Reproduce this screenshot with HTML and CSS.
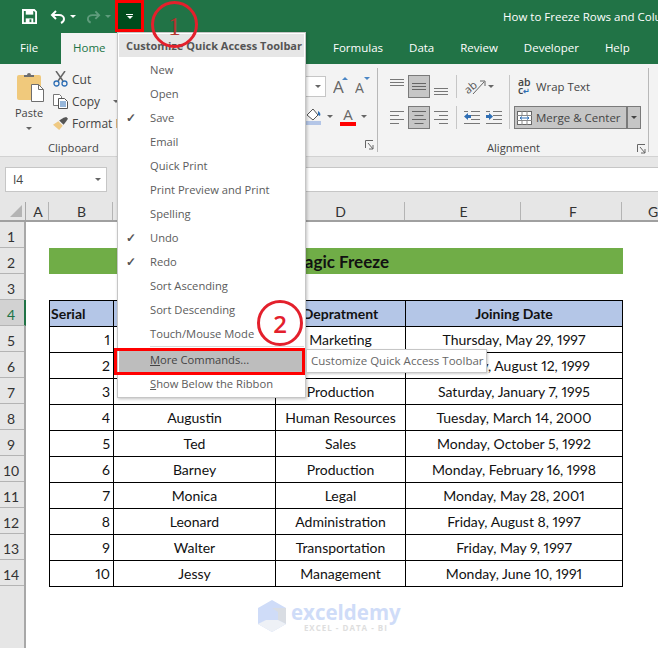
FILE: index.html
```html
<!DOCTYPE html>
<html lang="en">
<head>
    <meta charset="UTF-8">
    <meta name="viewport" content="width=device-width, initial-scale=1.0">
    <title>How to Freeze Rows and Columns</title>
    <link rel="stylesheet" href="styles.css">
</head>
<body>
<div class="window">

    <div class="titlebar">
        <svg class="qat-save" width="15" height="15" viewBox="0 0 16 16"><path d="M1 1h12l2 2v12H1z" fill="none" stroke="#fff" stroke-width="2"/><rect x="4" y="2" width="8" height="4" fill="#fff"/><rect x="4" y="10" width="8" height="5" fill="#fff"/><rect x="8" y="11" width="2" height="3" fill="#217346"/></svg>
        <svg class="qat-undo" width="16" height="14" viewBox="0 0 16 14"><path d="M6 1 2 5l4 4M2 5h7c3 0 5 2 5 4s-1 3-3 4" fill="none" stroke="#fff" stroke-width="2"/></svg>
        <span class="caret caret-white qat-caret"></span>
        <svg class="qat-redo" width="15" height="14" viewBox="0 0 16 14"><path d="M10 1l4 4-4 4M14 5H7C4 5 2 7 2 9s1 3 3 4" fill="none" stroke="#5f9c7c" stroke-width="2"/></svg>
        <span class="caret caret-dim qat-caret"></span>
        <div class="qat-customize"><span class="qat-dash"></span><span class="caret caret-white"></span></div>
        <div class="doc-title">How to Freeze Rows and Columns at the Same Time</div>
    </div>

    <div class="tabs">
        <span class="tab tab-file">File</span>
        <span class="tab tab-home">Home</span>
        <span class="tab tab-first-right">Formulas</span>
        <span class="tab">Data</span>
        <span class="tab">Review</span>
        <span class="tab">Developer</span>
        <span class="tab">Help</span>
    </div>

    <div class="ribbon">
        <section class="group group-clipboard">
            <div class="group-body clip-body">
                <div class="paste">
                    <svg width="28" height="30" viewBox="0 0 28 30"><rect x="0" y="3" width="24" height="25" rx="2" fill="#f0c97c"/><path d="M7 5V3h3a2 2 0 0 1 4 0h3v2z" fill="#6e6e6e"/><path d="M14.500 12.500h7l5 5v12h-12z" fill="#fff" stroke="#6e6e6e"/><path d="M21.500 12.500v5h5" fill="none" stroke="#6e6e6e"/></svg>
                    <span class="paste-label">Paste</span>
                    <span class="caret caret-gray"></span>
                </div>
                <div class="clip-list">
                    <div class="clip-item">
                        <svg width="15" height="16" viewBox="0 0 15 16"><path d="M3 0l7 10M12 0 5 10" stroke="#666" stroke-width="1.500" fill="none"/><circle cx="3.500" cy="12.500" r="2.500" fill="none" stroke="#2f6fb5" stroke-width="1.300"/><circle cx="11.500" cy="12.500" r="2.500" fill="none" stroke="#2f6fb5" stroke-width="1.300"/></svg>
                        <span>Cut</span>
                    </div>
                    <div class="clip-item">
                        <svg width="15" height="15" viewBox="0 0 15 15"><path d="M.5.500h6l2 2v9h-8z" fill="#fff" stroke="#777"/><path d="M5.500 4.500h6l3 3v7h-9z" fill="#fff" stroke="#555"/><path d="M7 8h6M7 10h6M7 12h6" stroke="#2f6fb5"/></svg>
                        <span>Copy</span>
                        <span class="caret caret-gray copy-caret"></span>
                    </div>
                    <div class="clip-item">
                        <svg width="17" height="15" viewBox="0 0 17 15"><path d="M0 9l6-4 5 5-4 5z" fill="#efc982"/><path d="M7 4l5-3 3-1 2 2-2 3-3 4z" fill="#555"/></svg>
                        <span>Format Painter</span>
                    </div>
                </div>
            </div>
            <div class="group-label">Clipboard</div>
        </section>

        <section class="group group-font">
            <div class="font-rows">
                <div class="font-row">
                    <div class="size-box"><span class="caret caret-gray"></span></div>
                    <svg class="grow-icon" width="15" height="18" viewBox="0 0 15 18"><text x="0" y="17" class="glyph-a glyph-a-big">A</text><path d="M9 4l3-3 3 3z" fill="#4a86c5"/></svg>
                    <svg class="shrink-icon" width="16" height="18" viewBox="0 0 16 18"><text x="0" y="17" class="glyph-a">A</text><path d="M9 1h6l-3 3z" fill="#4a86c5"/></svg>
                </div>
                <div class="font-row font-row-low">
                    <svg class="fill-icon" width="16" height="20" viewBox="0 0 16 20"><path d="M1 9l6-6 5 6-5 5z" fill="#fff" stroke="#555"/><path d="M12 5c2 1 3 3 2 5l-2-1z" fill="#2f6fb5"/><rect x="0" y="15" width="15" height="4" fill="#b4c6e7"/></svg>
                    <span class="caret caret-gray fill-caret"></span>
                    <div class="color-a"><span class="color-a-letter">A</span><span class="color-a-bar"></span></div>
                    <span class="caret caret-gray color-caret"></span>
                </div>
            </div>
            <svg class="launcher" width="9" height="10" viewBox="0 0 9 10"><path d="M.5 8V.5H8M3 3l5 6M8 5v4H4" fill="none" stroke="#666"/></svg>
        </section>

        <section class="group group-align">
            <div class="group-body align-body">
                <div class="align-grid">
                    <button class="align-btn"><svg width="14" height="23" viewBox="0 0 14 23"><path d="M0 3.500h14M0 6.500h14M0 9.500h14" stroke="#777"/></svg></button>
                    <button class="align-btn is-on"><svg width="14" height="21" viewBox="0 0 14 21"><path d="M0 7.500h14M0 10.500h14M0 13.500h14" stroke="#666"/></svg></button>
                    <button class="align-btn"><svg width="14" height="23" viewBox="0 0 14 23"><path d="M0 12.500h14M0 15.500h14M0 18.500h14" stroke="#777"/></svg></button>
                    <button class="align-btn"><svg width="14" height="23" viewBox="0 0 14 23"><path d="M0 4.500h14M0 8.500h9M0 12.500h14M0 16.500h9" stroke="#777"/></svg></button>
                    <button class="align-btn is-on"><svg width="14" height="21" viewBox="0 0 14 21"><path d="M0 4.500h14M2.500 8.500h9M0 12.500h14M2.500 16.500h9" stroke="#666"/></svg></button>
                    <button class="align-btn"><svg width="14" height="23" viewBox="0 0 14 23"><path d="M0 4.500h14M5 8.500h9M0 12.500h14M5 16.500h9" stroke="#777"/></svg></button>
                </div>
                <div class="orient-col">
                    <div class="orient-row">
                        <svg width="22" height="16" viewBox="0 0 22 16"><text x="1" y="13" transform="rotate(-40 6 10)" class="glyph-ab">ab</text><path d="M9 15 20 3M16 2h5v5" fill="none" stroke="#666"/></svg>
                        <span class="caret caret-gray"></span>
                    </div>
                    <div class="orient-row orient-row-low">
                        <svg width="16" height="13" viewBox="0 0 16 13"><path d="M7 .5h9M7 4.500h9M7 8.500h9M0 12.500h16M0 .500h4" stroke="#777"/><path d="M0 5.500 4 2v2h3v3H4v2z" fill="#2f6fb5"/></svg>
                        <svg width="16" height="13" viewBox="0 0 16 13"><path d="M7 .5h9M7 4.500h9M7 8.500h9M0 12.500h16M0 .500h4" stroke="#777"/><path d="M7 5.500 3 2v2H0v3h3v2z" fill="#2f6fb5"/></svg>
                    </div>
                </div>
                <div class="wrap-col">
                    <div class="wrap-row">
                        <div class="abc-icon"><span>ab</span><span>c<i class="abc-arrow">↵</i></span></div>
                        <span>Wrap Text</span>
                    </div>
                    <div class="merge-btn">
                        <div class="merge-main">
                            <svg width="15" height="14" viewBox="0 0 15 14"><rect x=".5" y=".5" width="14" height="13" fill="#fff" stroke="#666"/><path d="M0 4.500h15M0 9.500h15M5 0v4M10 0v4M5 10v4M10 10v4" stroke="#888"/><path d="M3 7h9M5 5.500 3 7l2 1.500M10 5.500 12 7l-2 1.500" fill="none" stroke="#2f6fb5"/></svg>
                            <span>Merge &amp; Center</span>
                        </div>
                        <div class="merge-drop"><span class="caret caret-dark"></span></div>
                    </div>
                </div>
            </div>
            <div class="group-label">Alignment</div>
            <svg class="launcher" width="9" height="10" viewBox="0 0 9 10"><path d="M.5 8V.5H8M3 3l5 6M8 5v4H4" fill="none" stroke="#666"/></svg>
        </section>
    </div>

    <div class="formula-bar">
        <div class="name-box"><span>I4</span><span class="caret caret-gray name-caret"></span></div>
        <div class="formula-input"></div>
    </div>

    <div class="col-heads">
        <div class="corner"><span class="corner-tri"></span></div>
        <span class="col-head col-a">A</span>
        <span class="col-head col-b">B</span>
        <span class="col-head col-c">C</span>
        <span class="col-head col-d">D</span>
        <span class="col-head col-e">E</span>
        <span class="col-head col-f">F</span>
        <span class="col-head col-g">G</span>
    </div>

    <div class="sheet">
        <div class="row-heads">
            <span class="row-head">1</span>
            <span class="row-head">2</span>
            <span class="row-head">3</span>
            <span class="row-head is-active">4</span>
            <span class="row-head">5</span>
            <span class="row-head">6</span>
            <span class="row-head">7</span>
            <span class="row-head">8</span>
            <span class="row-head">9</span>
            <span class="row-head">10</span>
            <span class="row-head">11</span>
            <span class="row-head">12</span>
            <span class="row-head">13</span>
            <span class="row-head">14</span>
        </div>
        <div class="cells">
            <div class="sheet-title">Magic Freeze</div>
            <table class="data">
                <colgroup>
                    <col class="w-serial"><col class="w-name"><col class="w-dept"><col class="w-date">
                </colgroup>
                <thead>
                    <tr><th class="serial-head">Serial</th><th>Name</th><th>Depratment</th><th>Joining Date</th></tr>
                </thead>
                <tbody>
                    <tr><td class="num">1</td><td></td><td>Marketing</td><td>Thursday, May 29, 1997</td></tr>
                    <tr><td class="num">2</td><td></td><td></td><td>Monday, August 12, 1999</td></tr>
                    <tr><td class="num">3</td><td></td><td>Production</td><td>Saturday, January 7, 1995</td></tr>
                    <tr><td class="num">4</td><td>Augustin</td><td>Human Resources</td><td>Tuesday, March 14, 2000</td></tr>
                    <tr><td class="num">5</td><td>Ted</td><td>Sales</td><td>Monday, October 5, 1992</td></tr>
                    <tr><td class="num">6</td><td>Barney</td><td>Production</td><td>Monday, February 16, 1998</td></tr>
                    <tr><td class="num">7</td><td>Monica</td><td>Legal</td><td>Monday, May 28, 2001</td></tr>
                    <tr><td class="num">8</td><td>Leonard</td><td>Administration</td><td>Friday, August 8, 1997</td></tr>
                    <tr><td class="num">9</td><td>Walter</td><td>Transportation</td><td>Friday, May 9, 1997</td></tr>
                    <tr><td class="num">10</td><td>Jessy</td><td>Management</td><td>Monday, June 10, 1991</td></tr>
                </tbody>
            </table>
        </div>
    </div>

    <!-- dropdown + things lying over the sheet -->
    <div class="qat-menu">
        <div class="menu-head">Customize Quick Access Toolbar</div>
        <div class="menu-item">New</div>
        <div class="menu-item">Open</div>
        <div class="menu-item is-checked">Save</div>
        <div class="menu-item">Email</div>
        <div class="menu-item">Quick Print</div>
        <div class="menu-item">Print Preview and Print</div>
        <div class="menu-item">Spelling</div>
        <div class="menu-item is-checked">Undo</div>
        <div class="menu-item is-checked">Redo</div>
        <div class="menu-item">Sort Ascending</div>
        <div class="menu-item">Sort Descending</div>
        <div class="menu-item">Touch/Mouse Mode</div>
        <div class="menu-sep"></div>
        <div class="menu-item is-hot"><span><u>M</u>ore Commands...</span></div>
        <div class="menu-item"><span><u>S</u>how Below the Ribbon</span></div>
    </div>

    <div class="tooltip">Customize Quick Access Toolbar</div>
    <div class="red-box"></div>
    <div class="callout callout-one">1</div>
    <div class="callout callout-two">2</div>

    <div class="watermark">
        <svg width="28" height="32" viewBox="0 0 28 32"><path d="M14 0 28 8v16L14 32 0 24V8z" fill="#cfdcf8"/><path d="M14 8h14v16l-8-4v-8z" fill="#d9dde3"/><path d="M14 20h6l8 4-14 8-14-8 8-4z" fill="#eef1f6"/></svg>
        <div class="wm-text">
            <span class="wm-name">exceldemy</span>
            <span class="wm-sub">EXCEL - DATA - BI</span>
        </div>
    </div>
</div>
</body>
</html>
```

FILE: styles.css
```css
* {
    box-sizing: border-box;
    margin: 0;
    padding: 0;
}

body {
    background-color: #fff;
    font-family: 'Open Sans', 'Noto Sans', sans-serif;
    font-size: 12px;
    color: #444;
    overflow: hidden;
}

.window {
    position: relative;
    width: 658px;
    height: 648px;
    overflow: hidden;
}

/* carets */
.caret {
    display: inline-block;
    flex: none;
    width: 0;
    height: 0;
    border-left: 3px solid transparent;
    border-right: 3px solid transparent;
    border-top: 3px solid #666;
}

.caret-white { border-top-color: #fff; }
.caret-dim { border-top-color: #5f9c7c; }
.caret-gray { border-top-color: #666; }
.caret-dark { border-top-color: #444; }

/* title bar */
.titlebar {
    display: flex;
    align-items: center;
    height: 33px;
    background-color: #217346;
    padding-left: 22px;
}

.titlebar > * { flex: none; }

.qat-undo { margin-left: 13px; }
.qat-caret { margin-left: 4px; }
.qat-redo { margin-left: 10px; }

.qat-customize {
    display: flex;
    flex-direction: column;
    align-items: center;
    justify-content: center;
    gap: 1px;
    width: 29px;
    height: 32px;
    margin-left: 4px;
    margin-top: -1px;
    background-color: #004b1c;
    outline: 3px solid #f00;
    outline-offset: -3px;
}

.qat-dash {
    width: 7px;
    height: 1px;
    background-color: #fff;
}

.doc-title {
    margin-left: 359px;
    width: 155px;
    color: #fff;
    white-space: nowrap;
    overflow: hidden;
    font-size: 11.500px;
}

/* tabs */
.tabs {
    display: flex;
    height: 31px;
    background-color: #217346;
    color: #fff;
}

.tab {
    flex: none;
    padding: 7px 13px 0;
    font-size: 11.500px;
}

.tab-file {
    width: 61px;
    padding-left: 20px;
    padding-right: 0;
}

.tab-home {
    width: 56px;
    padding-left: 12px;
    padding-right: 0;
    background-color: #f3f3f3;
    color: #217346;
}

.tab-first-right { margin-left: 203px; }

/* ribbon */
.ribbon {
    display: flex;
    height: 93px;
    background-color: #f3f3f3;
    border-bottom: 1px solid #d2d2d2;
}

.group {
    position: relative;
    display: flex;
    flex-direction: column;
    flex: none;
    padding-bottom: 1px;
}

.group-body {
    flex: 1;
    min-height: 0;
}

.group-label {
    text-align: center;
    height: 20px;
    line-height: 25px;
    font-size: 11.200px;
}

.group-clipboard {
    width: 117px;
    overflow: hidden;
}

.clip-body {
    display: flex;
    padding: 4px 0 0 15px;
}

.paste {
    display: flex;
    flex: none;
    flex-direction: column;
    align-items: flex-start;
    width: 38px;
}

.paste svg { margin: 4px 0 0 2px; }

.paste-label {
    margin-top: 2px;
    font-size: 11px;
    line-height: 17px;
}

.paste .caret { margin: 6px 0 0 11px; }

.clip-list {
    display: flex;
    flex: none;
    flex-direction: column;
    white-space: nowrap;
}

.clip-item {
    display: flex;
    align-items: center;
    gap: 4px;
    height: 23.500px;
}

.clip-item svg {
    flex: none;
    width: 15px;
}

.copy-caret { margin-left: 9px; }

.group-clipboard .group-label {
    text-align: left;
    padding-left: 48px;
}

.group-font {
    width: 261px;
    padding-left: 189px;
    border-right: 1px solid #b8b8b8;
    margin: 4px 0;
}

.font-rows {
    display: flex;
    flex-direction: column;
    padding-top: 8px;
}

.font-row {
    display: flex;
    align-items: flex-start;
}

.size-box {
    display: flex;
    align-items: center;
    justify-content: flex-end;
    width: 20px;
    height: 21px;
    padding-right: 4px;
    background-color: #fff;
    border: 1px solid #c6c6c6;
    border-left: none;
}

.grow-icon { margin-left: 7px; }
.shrink-icon { margin-left: 7px; }

.glyph-a {
    font-size: 14px;
    fill: #666;
}

.glyph-a-big { font-size: 17px; }

.font-row-low {
    margin-top: 8px;
    align-items: center;
    height: 22px;
}

.fill-caret { margin-left: 5px; }

.color-a {
    display: flex;
    flex-direction: column;
    align-items: center;
    width: 16px;
    margin-left: 7px;
}

.color-a-letter {
    font-size: 15px;
    line-height: 15px;
    color: #666;
}

.color-a-bar {
    width: 16px;
    height: 4px;
    background-color: #f00;
}

.color-caret { margin-left: 5px; }

.launcher {
    position: absolute;
    right: 3px;
    bottom: 2px;
}

.group-align {
    width: 271px;
}

.group-align::after {
    content: "";
    position: absolute;
    top: 4px;
    bottom: 4px;
    right: 0;
    width: 1px;
    background-color: #b8b8b8;
}

.align-body {
    display: flex;
    padding: 11px 0 0 8px;
}

.align-grid {
    display: grid;
    grid-template-columns: repeat(3, 22px);
    grid-template-rows: 23px 23px;
    row-gap: 8px;
}

.align-btn {
    display: flex;
    justify-content: center;
    background: none;
    border: 1px solid transparent;
}

.align-btn.is-on {
    background-color: #c6c6c6;
    border-color: #7a7a7a;
}

.align-btn svg { display: block; }

.orient-col {
    display: flex;
    flex-direction: column;
    gap: 8px;
    width: 58px;
    height: 54px;
    border-right: 1px solid #c6c6c6;
}

.orient-row {
    display: flex;
    align-items: center;
    gap: 2px;
    height: 23px;
    margin-left: 4px;
    padding-left: 7px;
    border-left: 1px solid #c6c6c6;
}

.orient-row-low { gap: 6px; }

.glyph-ab {
    font-size: 11px;
    fill: #555;
}

.wrap-col {
    display: flex;
    flex-direction: column;
    gap: 8px;
    padding-left: 4px;
}

.wrap-row {
    display: flex;
    align-items: center;
    gap: 5px;
    height: 23px;
    padding-left: 4px;
    font-size: 11.400px;
}

.abc-icon {
    display: flex;
    flex-direction: column;
    font-size: 10.500px;
    font-weight: 600;
    line-height: 8px;
    width: 13px;
}

.abc-arrow {
    font-style: normal;
    font-size: 8px;
    color: #2f6fb5;
}

.merge-btn {
    display: flex;
    width: 127px;
    height: 23px;
    background-color: #c6c6c6;
    border: 1px solid #7a7a7a;
}

.merge-main {
    display: flex;
    align-items: center;
    gap: 4px;
    flex: 1;
    padding-left: 2px;
    font-size: 11.500px;
    white-space: nowrap;
    border-right: 2px solid #7a7a7a;
}

.merge-drop {
    display: flex;
    align-items: center;
    justify-content: center;
    width: 12px;
}

/* formula bar */
.formula-bar {
    display: flex;
    align-items: flex-start;
    height: 35px;
    background-color: #e6e6e6;
    padding: 10px 0 0 5px;
}

.name-box {
    display: flex;
    align-items: center;
    width: 102px;
    height: 25px;
    padding-left: 7px;
    background-color: #fff;
    border: 1px solid #c6c6c6;
}

.name-caret { margin-left: auto; margin-right: 5px; }

.formula-input {
    width: 352px;
    height: 25px;
    margin-left: 199px;
    background-color: #fff;
    border-top: 1px solid #c6c6c6;
    border-bottom: 1px solid #c6c6c6;
}

/* sheet headers */
.col-heads {
    display: flex;
    align-items: flex-end;
    height: 30px;
    background-color: #e6e6e6;
    border-bottom: 2px solid #a0a0a0;
    font-family: 'Lato', sans-serif;
    font-size: 14px;
    color: #333;
    white-space: nowrap;
}

.corner {
    position: relative;
    flex: none;
    width: 26px;
    height: 18px;
    border-right: 1px solid #a8a8a8;
}

.corner-tri {
    position: absolute;
    right: 3px;
    bottom: 3px;
    width: 0;
    height: 0;
    border-left: 12px solid transparent;
    border-bottom: 12px solid #b4b4b4;
}

.col-head {
    flex: none;
    height: 18px;
    line-height: 19px;
    padding-left: 2px;
    text-align: center;
    border-right: 1px solid #b4b4b4;
}

.col-a { width: 23px; }
.col-b { width: 64px; }
.col-c { width: 162px; }
.col-d { width: 130px; }
.col-e { width: 116px; }
.col-f { width: 101px; padding-left: 4px; }
.col-g { width: 60px; border-right: none; }

.sheet {
    display: flex;
    height: 426px;
}

.row-heads {
    display: flex;
    flex-direction: column;
    flex: none;
    width: 26px;
    background-color: #e6e6e6;
    border-right: 2px solid #a8a8a8;
    font-family: 'Lato', sans-serif;
    font-size: 14px;
    color: #333;
}

.row-head {
    flex: none;
    height: 26px;
    line-height: 30px;
    text-align: center;
    padding-right: 2px;
    border-bottom: 1px solid #b4b4b4;
}

.row-head.is-active {
    margin-right: -2px;
    background-color: #d2d2d2;
    border-right: 2px solid #217346;
    color: #217346;
}

.cells {
    flex: 1;
    padding: 26px 0 0 23px;
    font-family: 'Lato', sans-serif;
    font-size: 14px;
    font-variant-numeric: proportional-nums;
    color: #111;
}

.sheet-title {
    width: 574px;
    height: 26px;
    padding-left: 6px;
    line-height: 28px;
    text-align: center;
    font-size: 17px;
    font-weight: 700;
    background-color: #70ad47;
    color: #111;
}

.data {
    width: 573px;
    margin-top: 26px;
    border-collapse: collapse;
    table-layout: fixed;
}

.w-serial { width: 64px; }
.w-name { width: 162px; }
.w-dept { width: 130px; }
.w-date { width: 217px; }

.data th,
.data td {
    height: 26px;
    padding: 0 3px;
    border: 1.500px solid #000;
    text-align: center;
    white-space: nowrap;
}

.data th {
    background-color: #b4c6e7;
    font-weight: 700;
}

.data .serial-head { text-align: left; padding-left: 1px; }
.data .num { text-align: right; }

/* quick access dropdown */
.qat-menu {
    position: absolute;
    left: 117px;
    top: 32px;
    width: 189px;
    height: 366px;
    padding: 1px;
    background-color: #fff;
    border: 1px solid #c6c6c6;
    box-shadow: 1px 1px 3px rgba(0, 0, 0, 0.25);
    font-size: 11.200px;
    color: #5c5c5c;
}

.menu-head {
    height: 23px;
    line-height: 23px;
    padding-left: 7px;
    margin-bottom: 1px;
    background-color: #e6e6e6;
    font-weight: 700;
    font-size: 11px;
    white-space: nowrap;
    color: #555;
}

.menu-item {
    position: relative;
    height: 24px;
    line-height: 24px;
    padding-left: 31px;
    white-space: nowrap;
}

.menu-item.is-checked::before {
    content: "✓";
    position: absolute;
    left: 7px;
    top: 0;
    font-size: 12px;
    font-weight: 700;
    color: #555;
}

.menu-sep {
    height: 1px;
    margin-left: 31px;
    background-color: #d8d8d8;
}

.menu-item.is-hot {
    height: 24px;
    margin-top: 1px;
    background-color: #bdbdbd;
    color: #444;
}

.tooltip {
    position: absolute;
    left: 306px;
    top: 349px;
    width: 181px;
    height: 24px;
    line-height: 22px;
    padding-left: 4px;
    background-color: #fff;
    border: 1px solid #c6c6c6;
    box-shadow: 1px 1px 2px rgba(0, 0, 0, 0.2);
    font-size: 11.500px;
    color: #666;
    white-space: nowrap;
}

.red-box {
    position: absolute;
    left: 114px;
    top: 348px;
    width: 191px;
    height: 27px;
    border: 3px solid #f00;
}

.callout {
    position: absolute;
    display: flex;
    align-items: center;
    justify-content: center;
    border-radius: 50%;
    color: #e3202c;
}

.callout-one {
    left: 151px;
    top: 1px;
    width: 47px;
    height: 47px;
    border: 3px solid #e3202c;
    font-family: 'Liberation Serif', serif;
    font-size: 25px;
    padding-top: 5px;
    color: #b5342f;
}

.callout-two {
    left: 257px;
    top: 300px;
    width: 46px;
    height: 46px;
    border: 3px solid #e3202c;
    font-family: 'Open Sans', sans-serif;
    font-size: 24px;
    font-weight: 600;
}

/* watermark */
.watermark {
    position: absolute;
    left: 258px;
    top: 600px;
    display: flex;
    gap: 5px;
}

.wm-text {
    display: flex;
    flex-direction: column;
    align-items: center;
}

.wm-name {
    font-family: 'Open Sans', sans-serif;
    font-size: 20.500px;
    font-weight: 700;
    line-height: 24px;
    color: #cfdcf8;
}

.wm-sub {
    font-size: 8px;
    font-weight: 700;
    line-height: 8px;
    letter-spacing: 1px;
    color: #dedede;
}
```
